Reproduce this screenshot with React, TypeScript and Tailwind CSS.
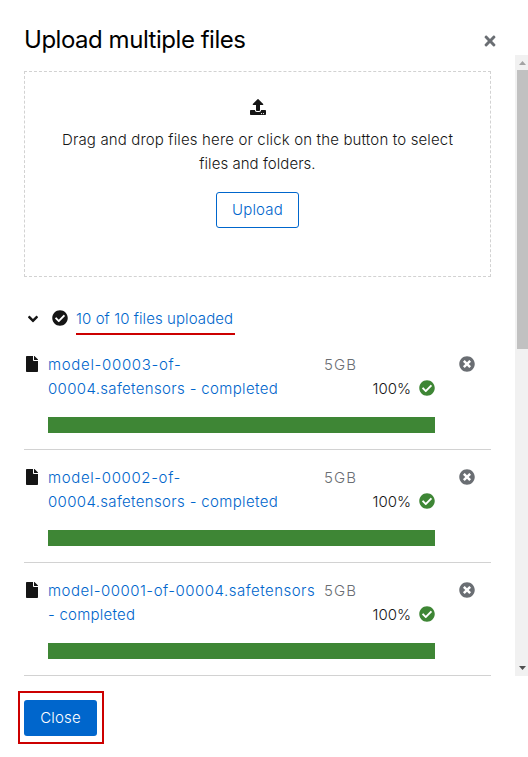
import { FaAngleDown, FaCheckCircle, FaFile, FaTimes, FaTimesCircle, FaUpload } from "react-icons/fa";

type UploadedFile = { lines: { text: string; className: string }[]; size: string };

const files: UploadedFile[] = [
  {
    lines: [
      { text: "model-00003-of-", className: "tracking-[0.67px]" },
      { text: "00004.safetensors - completed", className: "tracking-[0.34px]" },
    ],
    size: "5GB",
  },
  {
    lines: [
      { text: "model-00002-of-", className: "tracking-[0.63px]" },
      { text: "00004.safetensors - completed", className: "tracking-[0.34px]" },
    ],
    size: "5GB",
  },
  {
    lines: [
      { text: "model-00001-of-00004.safetensors", className: "tracking-[0.49px]" },
      { text: "- completed", className: "tracking-[0.23px]" },
    ],
    size: "5GB",
  },
];

function FileRow({ file }: { file: UploadedFile }) {
  return (
    <li className="flex h-[113px] border-b border-[#d2d2d2] pt-4">
      <FaFile className="ml-[2px] mt-[3px] h-4 w-3 shrink-0" />
      <div className="ml-[10px] w-[387px] shrink-0">
        <div className="flex h-12">
          <div className="w-[276px] shrink-0 whitespace-nowrap text-[#0066cc]">
            {file.lines.map((line) => (
              <div key={line.text} className={line.className}>
                {line.text}
              </div>
            ))}
          </div>
          <div className="grow">
            <div className="tracking-[1.1px] text-[#6a6e73]">{file.size}</div>
            <div className="flex justify-end gap-2">
              <span>100%</span>
              <FaCheckCircle className="mt-[3px] size-4 text-[#3e8635]" />
            </div>
          </div>
        </div>
        <div className="mt-4 h-4 bg-[#3e8635]" />
      </div>
      <FaTimesCircle className="ml-6 mt-[3px] size-4 shrink-0 text-[#6a6e73]" />
    </li>
  );
}

export default function App() {
  return (
    <div className="flex h-[757px] w-[528px] flex-col overflow-hidden bg-white font-['Inter',sans-serif] text-[15px] leading-6 font-light text-[#151515]">
      <header className="flex h-[55px] shrink-0 justify-between pl-6 pr-8">
        <h1 className="mt-6 text-2xl leading-[31px] font-normal tracking-[-0.47px] text-black">Upload multiple files</h1>
        <FaTimes className="mt-[33px] h-4 w-3 text-[#6a6e73]" />
      </header>

      <main className="flex h-[621px] shrink-0 justify-between pl-6">
        <div className="w-[467px] pt-4">
          <section className="flex h-[206px] flex-col items-center border border-dashed border-[#d2d2d2] pt-[27px] text-center">
            <FaUpload className="size-4" />
            <p className="mt-[13px] whitespace-nowrap">
              <span className="tracking-[0.15px]">Drag and drop files here or click on the button to select</span>
              <br />
              <span className="tracking-[0.05px]">files and folders.</span>
            </p>
            <button className="mt-4 h-9 w-[83px] rounded-[3px] border border-[#0066cc] tracking-[0.2px] text-[#0066cc]">
              Upload
            </button>
          </section>

          <div className="mt-[30px] flex h-6 items-center">
            <FaAngleDown className="ml-1 h-4 w-[10px]" />
            <FaCheckCircle className="-mt-[2px] ml-[14px] size-4" />
            <div className="ml-2 w-[159px] border-b-2 border-[#cc0000] pb-[2px] pt-1 tracking-[0.08px] whitespace-nowrap text-[#0066cc]">
              10 of 10 files uploaded
            </div>
          </div>

          <ul className="mt-[6px]">
            {files.map((file) => (
              <FileRow key={file.lines[0].text} file={file} />
            ))}
          </ul>
        </div>

        <div className="flex w-[13px] flex-col bg-[#f1f1f1] pl-[2px]">
          <svg className="h-[15px] w-[11px] shrink-0" viewBox="0 0 11 15">
            <path d="M2 10 L5.5 6 L9 10 Z" fill="#a3a3a3" />
          </svg>
          <div className="h-[279px] bg-[#c1c1c1]" />
          <svg className="mt-auto h-[15px] w-[11px] shrink-0" viewBox="0 0 11 15">
            <path d="M2 5 H9 L5.5 9 Z" fill="#505050" />
          </svg>
        </div>
      </main>

      <footer className="pl-[18px] pt-[15px]">
        <div className="h-[53px] w-[86px] border-2 border-[#cc0000] pl-1 pt-[7px]">
          <button className="h-9 w-[73px] rounded-[3px] bg-[#0066cc] tracking-[0.2px] text-white">Close</button>
        </div>
      </footer>
    </div>
  );
}
